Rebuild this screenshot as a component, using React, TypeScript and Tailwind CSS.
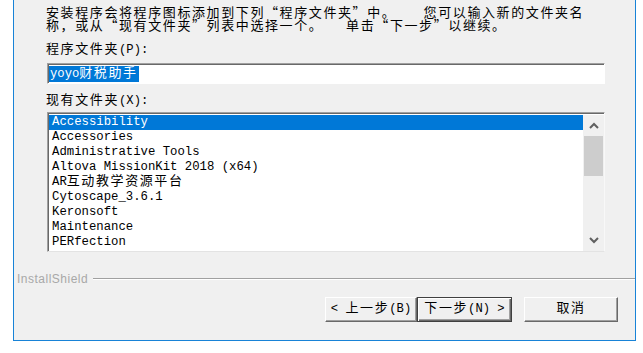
import React from "react";

function Z({ children }: { children: React.ReactNode }) {
  return (
    <span className="font-['Noto_Sans_CJK_SC',sans-serif] text-[13px] tracking-[1.6px] leading-[9px]">
      {children}
    </span>
  );
}

const rows: React.ReactNode[] = [
  "Accessibility",
  "Accessories",
  "Administrative Tools",
  "Altova MissionKit 2018 (x64)",
  <>
    AR<Z>互动教学资源平台</Z>
  </>,
  "Cytoscape_3.6.1",
  "Keronsoft",
  "Maintenance",
  "PERfection",
];

function Chevron({ up }: { up?: boolean }) {
  return (
    <svg width="10" height="7" viewBox="0 0 10 7">
      <polyline
        points={up ? "1,6 5,2 9,6" : "1,1 5,5 9,1"}
        fill="none"
        stroke="#606060"
        strokeWidth="2"
      />
    </svg>
  );
}

export default function App() {
  return (
    <div className="w-[643px] h-[353px] bg-white overflow-hidden text-black font-['Liberation_Mono','Noto_Sans_CJK_SC',monospace] text-[12.2px]">
      <div className="ml-[13px] w-[623px] h-[341px] border-x border-b border-[#1883d7] bg-[#f0f0f0] flex flex-col">
        <div className="pl-[32px] flex flex-col">
          <div className="mt-[5px] leading-[13px] whitespace-pre font-['Noto_Sans_CJK_SC',sans-serif] text-[13px] tracking-[1.6px]">
            <div>安装程序会将程序图标添加到下列“程序文件夹”中。　　 您可以输入新的文件夹名</div>
            <div>称，或从“现有文件夹”列表中选择一个。　　单击“下一步”以继续。</div>
          </div>
          <div className="mt-[12px] h-[14px] leading-[14px] whitespace-pre">
            <Z>程序文件夹</Z>(P):
          </div>
          <div className="mt-[6px] ml-[1px] w-[558px] h-[21px] bg-white border border-t-[#a0a0a0] border-l-[#a0a0a0] border-r-white border-b-white shadow-[inset_1px_1px_0_#696969] pl-[1px] pt-[2px]">
            <div className="w-fit h-[16px] leading-[16px] bg-[#0078d7] text-white px-[1px]">
              yoyo<Z>财税助手</Z>
            </div>
          </div>
          <div className="mt-[10px] h-[14px] leading-[14px] whitespace-pre">
            <Z>现有文件夹</Z>(X):
          </div>
          <div className="mt-[4px] ml-[1px] w-[558px] h-[140px] bg-white border border-t-[#a0a0a0] border-l-[#a0a0a0] border-r-[#f8f8f8] border-b-[#e3e3e3] shadow-[inset_1px_1px_0_#696969] flex pt-[2px] pl-[1px]">
            <div className="flex-1 flex flex-col text-[12.3px] whitespace-pre">
              {rows.map((r, i) => (
                <div
                  key={i}
                  className={
                    i === 0
                      ? "h-[15px] leading-[15px] pl-[3px] bg-[#0078d7] text-white"
                      : "h-[15px] leading-[15px] pl-[3px]"
                  }
                >
                  {r}
                </div>
              ))}
            </div>
            <div className="w-[21px] bg-[#f0f0f0] flex flex-col">
              <div className="h-[21px] flex items-center justify-center">
                <Chevron up />
              </div>
              <div className="h-[40px] mx-[1px] bg-[#cdcdcd]" />
              <div className="flex-1" />
              <div className="h-[22px] flex items-center justify-center">
                <Chevron />
              </div>
            </div>
          </div>
        </div>
        <div className="mt-[20px] h-[14px] flex items-center pl-[3px]">
          <span className="font-['Liberation_Sans',sans-serif] text-[12px] tracking-[0.5px] text-[#a8a8a8] leading-[14px]">
            InstallShield
          </span>
          <div className="flex-1 ml-[5px] border-t border-t-[#a0a0a0] border-b border-b-white" />
        </div>
        <div className="mt-[11px] flex justify-end pr-[17px] whitespace-pre">
          <div className="w-[92px] h-[25px] leading-[22px] text-center bg-[#f0f0f0] border border-t-white border-l-white border-r-[#696969] border-b-[#696969] shadow-[inset_-1px_-1px_0_#a0a0a0]">
            {"< "}
            <Z>上一步</Z>(B)
          </div>
          <div className="w-[95px] h-[25px] leading-[22px] text-center bg-[#f0f0f0] border border-[#404040] shadow-[inset_1px_1px_0_#ffffff,inset_-1px_-1px_0_#696969,inset_-2px_-2px_0_#a0a0a0]">
            <Z>下一步</Z>
            {"(N) >"}
          </div>
          <div className="ml-[12px] w-[94px] h-[25px] leading-[22px] text-center bg-[#f0f0f0] border border-t-white border-l-white border-r-[#696969] border-b-[#696969] shadow-[inset_-1px_-1px_0_#a0a0a0]">
            <Z>取消</Z>
          </div>
        </div>
      </div>
    </div>
  );
}
